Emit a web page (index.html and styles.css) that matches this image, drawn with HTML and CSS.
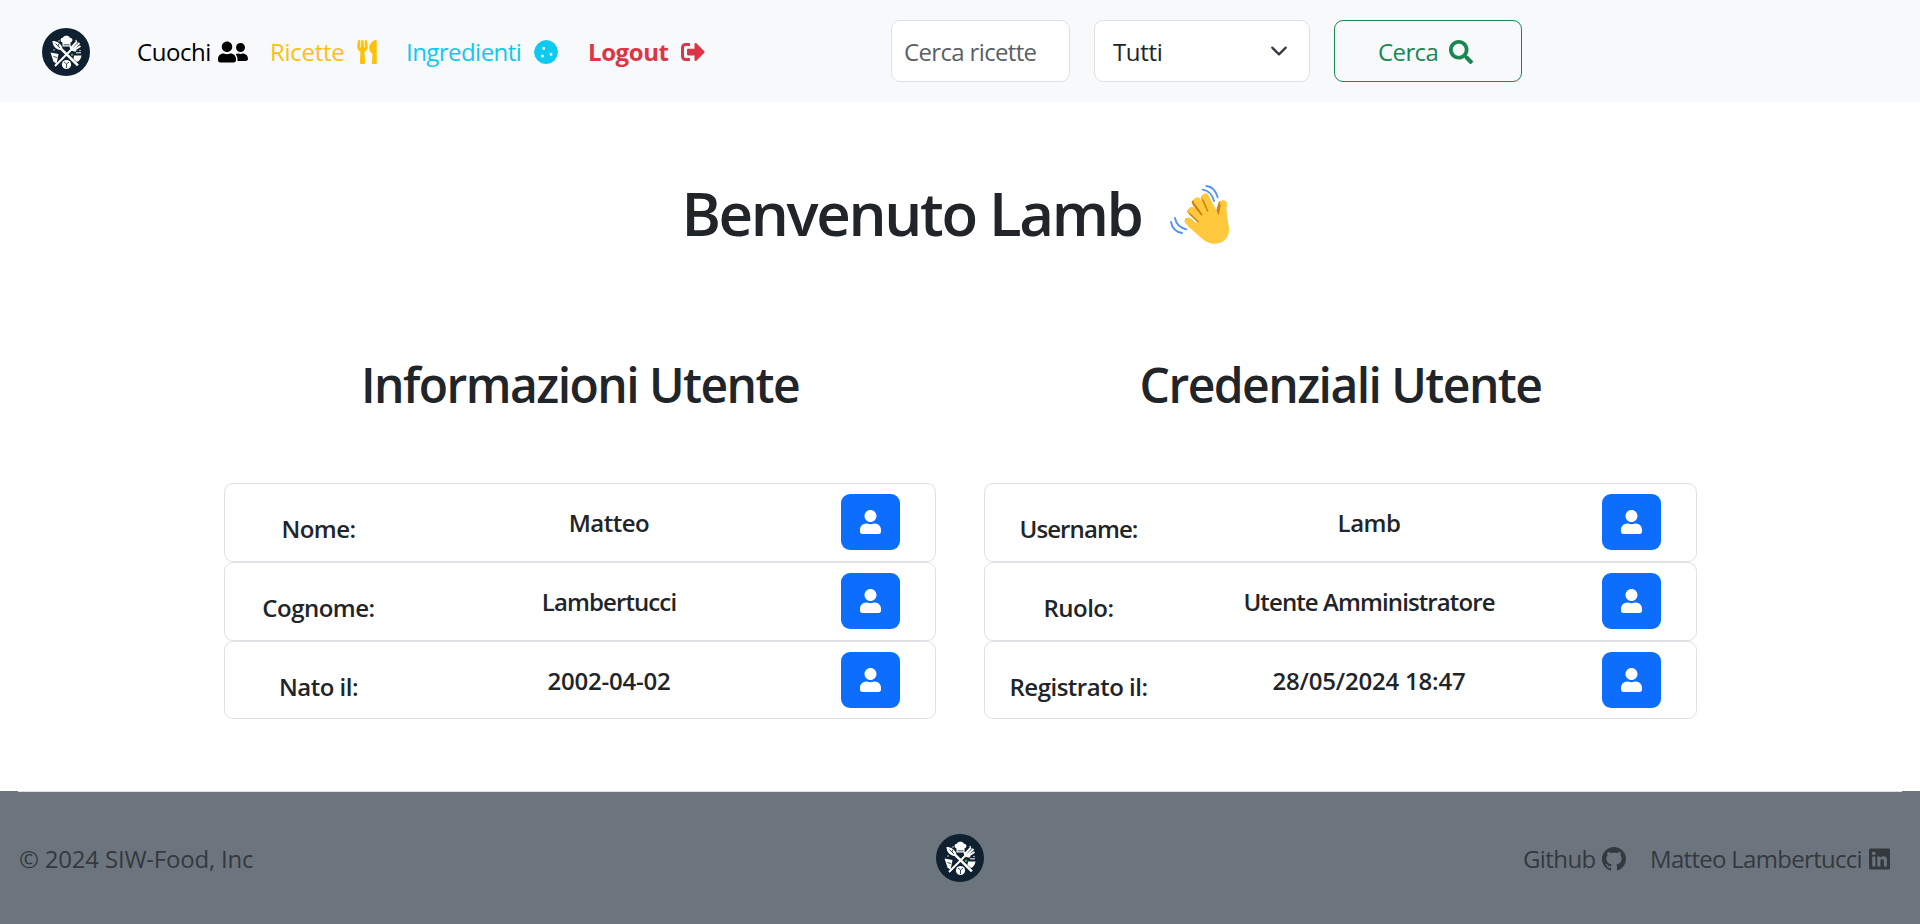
FILE: index.html
```html
<!DOCTYPE html>
<html lang="it">
<head>
<meta charset="utf-8">
<title>SIW-Food</title>
<link rel="stylesheet" href="styles.css">
</head>
<body>
<svg class="sprite" aria-hidden="true">
  <symbol id="logo" viewBox="0 0 48 48">
    <circle cx="24" cy="24" r="24" fill="#0f2131"/>
    <g fill="#fff">
      <path d="M20.500 18.500V14.400C17.800 13.800 18 9.500 21 9.800C21.800 7.200 27 7.200 27.800 9.800C31 9.500 31.300 13.800 28.500 14.400V18.500Z"/>
      <path d="M10.500 13C15 13 19.500 15.500 20.500 20.500L36.800 36.500L35 38.300L18.500 22C14 21.500 10.500 18 10.500 13Z"/>
      <path d="M8.500 24.500L16.500 26L14.500 36L11.500 33.500Z"/>
      <path d="M32 27.500H39.500C39 30.500 37.500 33 35 34L31.500 31Z"/>
      <circle cx="24.500" cy="36.500" r="4.600"/>
      <circle cx="12" cy="22" r=".7"/><circle cx="17" cy="13" r=".7"/><circle cx="34" cy="12.500" r=".7"/><circle cx="38" cy="22.500" r=".7"/>
    </g>
    <path d="M13 38L31 20M29 20L35 13.500M31 21L37.500 15M31.500 22.500L38.500 18" fill="none" stroke="#fff" stroke-width="1.900"/>
    <path d="M28.500 18C28.500 23 33 23 34 22" fill="none" stroke="#fff" stroke-width="1.800"/>
    <path d="M13.500 15.500L18 20M17 15.500L16 18M21.500 16.800H27.500M11.500 28.500L15 29.500M22 34L24.500 36L27 34M24.500 36V40" stroke="#0f2131" stroke-width=".8" fill="none"/>
    <circle cx="30" cy="26.800" r="1.200" fill="#43b02a"/>
    <path d="M34 24.800H39" stroke="#fff" stroke-width="1"/>
  </symbol>
  <symbol id="user" viewBox="0 0 448 512"><path d="M224 256c70.700 0 128-57.300 128-128S294.700 0 224 0 96 57.300 96 128s57.300 128 128 128zm89.600 32h-16.700c-22.200 10.200-46.900 16-72.900 16s-50.600-5.800-72.900-16h-16.700C60.200 288 0 348.200 0 422.400V464c0 26.500 21.500 48 48 48h352c26.500 0 48-21.500 48-48v-41.600c0-74.200-60.200-134.400-134.400-134.400z"/></symbol>
</svg>

<header class="navbar">
  <svg class="logo"><use href="#logo"/></svg>
  <nav class="links">
    <a class="link link-cooks"><span>Cuochi</span>
      <svg width="30" height="24" viewBox="0 0 640 512"><path d="M192 256c61.900 0 112-50.100 112-112S253.900 32 192 32 80 82.100 80 144s50.100 112 112 112zm76.800 32h-8.300c-20.800 10-43.900 16-68.500 16s-47.600-6-68.500-16h-8.300C51.600 288 0 339.600 0 403.200V432c0 26.500 21.500 48 48 48h288c26.500 0 48-21.500 48-48v-28.800c0-63.600-51.600-115.200-115.200-115.200zM480 256c53 0 96-43 96-96s-43-96-96-96-96 43-96 96 43 96 96 96zm48 32h-3.800c-13.900 4.800-28.600 8-44.200 8s-30.300-3.200-44.200-8H432c-20.400 0-39.200 5.900-55.700 15.400 24.400 26.300 39.700 61.200 39.700 99.800v38.400c0 2.200-.5 4.300-.6 6.400H592c26.500 0 48-21.500 48-48 0-61.900-50.100-112-112-112z"/></svg></a>
    <a class="link link-recipes"><span>Ricette</span>
      <svg width="20" height="24" viewBox="0 0 416 512"><path d="M207.900 15.200c.8 4.700 16.100 94.500 16.100 128.800 0 52.300-27.800 89.600-68.900 104.600L168 486.700c.7 13.700-10.200 25.300-24 25.300H80c-13.700 0-24.700-11.500-24-25.300l12.900-238.100C27.700 233.600 0 196.200 0 144 0 109.600 15.300 19.900 16.100 15.200 19.300-5.100 61.400-5.400 64 16.300v141.200c1.300 3.400 15.100 3.200 16 0 1.400-25.300 7.900-139.200 8-141.800 3.300-20.800 44.700-20.800 47.900 0 .2 2.700 6.600 116.500 8 141.800.9 3.200 14.800 3.400 16 0V16.300c2.600-21.600 44.800-21.400 48-1.100zm119.200 285.700l-15 185.100c-1.200 14 9.900 26 23.900 26h56c13.300 0 24-10.700 24-24V24c0-13.200-10.700-24-24-24-82.500 0-221.400 178.500-64.900 300.900z"/></svg></a>
    <a class="link link-ingredients"><span>Ingredienti</span>
      <svg width="24" height="24" viewBox="0 0 24 24"><path fill-rule="evenodd" d="M8 .9L12 0L16 .8L20 3L22.800 7L24 12L23.100 16.300L20.500 20.500L16.500 23.200L12 24L7.500 23.200L3.400 20.300L.9 16.500L0 12L1.200 7.500L4 3.400ZM9.700 6.800a1.500 1.500 0 1 0 0 3a1.500 1.500 0 1 0 0-3M8.500 14.500a1.500 1.500 0 1 0 0 3a1.500 1.500 0 1 0 0-3M17 12.800a1.500 1.500 0 1 0 0 3a1.500 1.500 0 1 0 0-3"/></svg></a>
    <a class="link link-logout"><span>Logout</span>
      <svg width="24" height="24" viewBox="0 0 512 512"><path d="M497 273L329 441c-15 15-41 4.500-41-17v-96H152c-13.300 0-24-10.700-24-24v-96c0-13.300 10.700-24 24-24h136V88c0-21.400 25.900-32 41-17l168 168c9.300 9.400 9.300 24.600 0 34zM192 436v-40c0-6.600-5.400-12-12-12H96c-17.700 0-32-14.300-32-32V160c0-17.700 14.300-32 32-32h84c6.600 0 12-5.400 12-12V76c0-6.600-5.400-12-12-12H96c-53 0-96 43-96 96v192c0 53 43 96 96 96h84c6.600 0 12-5.400 12-12z"/></svg></a>
  </nav>
  <form class="search">
    <input class="search-input" type="text" placeholder="Cerca ricette">
    <div class="select"><span>Tutti</span>
      <svg width="18" height="18" viewBox="0 0 16 16"><path d="m2 5 6 6 6-6" fill="none" stroke="#343a40" stroke-width="2" stroke-linecap="round" stroke-linejoin="round"/></svg></div>
    <button class="search-btn" type="button"><span>Cerca</span>
      <svg width="24" height="24" viewBox="0 0 512 512"><path d="M505 442.700L405.300 343c-4.500-4.500-10.600-7-17-7H372c27.600-35.300 44-79.700 44-128C416 93.100 322.900 0 208 0S0 93.100 0 208s93.100 208 208 208c48.300 0 92.700-16.400 128-44v16.300c0 6.400 2.500 12.500 7 17l99.700 99.700c9.400 9.400 24.600 9.400 33.900 0l28.300-28.300c9.400-9.400 9.400-24.600.1-34zM208 336c-70.700 0-128-57.200-128-128 0-70.700 57.200-128 128-128 70.700 0 128 57.200 128 128 0 70.700-57.200 128-128 128z"/></svg></button>
  </form>
</header>

<main>
  <h1 class="welcome"><span>Benvenuto Lamb</span>
    <svg class="wave" viewBox="24 18 180 180">
      <g fill="none" stroke-linecap="round">
        <path d="M133 21Q158 23 167 55M122 32Q147 35 156 66M39 117Q44 144 73 151M27 129Q32 157 60 162" stroke="#5491f5" stroke-width="5.500"/>
        <path d="M98 71L130 116M85 97L118 128M77 126L108 148M126 58L147 100M177 75L168 108" stroke="#d07f10" stroke-width="17"/>
        <path d="M106 66L148 124M130 54L162 115M90 95L135 140M80 127L128 170" stroke="#ffc83d" stroke-width="22"/>
        <path d="M184 75L179 125" stroke="#ffc83d" stroke-width="22"/>
      </g>
      <path d="M124 104L160 95Q164 110 169 102L194 94Q195 120 201 146C204 178 180 196 153 194C133 193 118 178 106 166L76 140L106 130Z" fill="#ffc83d"/>
      <path d="M98 78L118 107M84 105L108 128M123 64L137 96M174 78L169 104" fill="none" stroke="#d07f10" stroke-width="4.500" stroke-linecap="round"/>
    </svg>
  </h1>
  <div class="columns">
    <section class="panel">
      <h2 class="panel-title">Informazioni Utente</h2>
      <div class="row"><span class="label">Nome:</span><span class="value">Matteo</span><button class="btn"><svg width="21" height="24"><use href="#user"/></svg></button></div>
      <div class="row"><span class="label">Cognome:</span><span class="value snug">Lambertucci</span><button class="btn"><svg width="21" height="24"><use href="#user"/></svg></button></div>
      <div class="row"><span class="label">Nato il:</span><span class="value digits">2002-04-02</span><button class="btn"><svg width="21" height="24"><use href="#user"/></svg></button></div>
    </section>
    <section class="panel">
      <h2 class="panel-title">Credenziali Utente</h2>
      <div class="row"><span class="label snug">Username:</span><span class="value">Lamb</span><button class="btn"><svg width="21" height="24"><use href="#user"/></svg></button></div>
      <div class="row"><span class="label">Ruolo:</span><span class="value snug">Utente Amministratore</span><button class="btn"><svg width="21" height="24"><use href="#user"/></svg></button></div>
      <div class="row"><span class="label">Registrato il:</span><span class="value digits">28/05/2024 18:47</span><button class="btn"><svg width="21" height="24"><use href="#user"/></svg></button></div>
    </section>
  </div>
</main>

<footer class="footer">
  <div class="footer-inner">
    <span class="copyright">© 2024 SIW-Food, Inc</span>
    <svg class="logo"><use href="#logo"/></svg>
    <div class="social">
      <a class="social-link github"><span>Github</span>
        <svg width="24" height="24" viewBox="0 0 16 16"><path d="M8 0C3.580 0 0 3.580 0 8c0 3.540 2.290 6.530 5.470 7.590.4.070.55-.17.55-.38 0-.19-.01-.82-.01-1.490-2.010.37-2.530-.49-2.690-.94-.09-.23-.48-.94-.82-1.130-.28-.15-.68-.52-.01-.53.63-.01 1.080.58 1.230.82.72 1.210 1.870.87 2.330.66.070-.52.28-.87.51-1.070-1.780-.2-3.640-.89-3.640-3.950 0-.87.31-1.590.82-2.150-.08-.2-.36-1.020.08-2.120 0 0 .67-.21 2.200.82.64-.18 1.320-.27 2-.27s1.360.09 2 .27c1.530-1.040 2.200-.82 2.200-.82.44 1.100.16 1.920.08 2.120.51.56.82 1.270.82 2.150 0 3.070-1.870 3.750-3.650 3.950.29.25.54.73.54 1.480 0 1.070-.01 1.930-.01 2.200 0 .21.15.46.55.38A8.010 8.010 0 0 0 16 8c0-4.420-3.580-8-8-8"/></svg></a>
      <a class="social-link linkedin"><span>Matteo Lambertucci</span>
        <svg width="21" height="24" viewBox="0 0 448 512"><path d="M416 32H31.900C14.300 32 0 46.500 0 64.300v383.400C0 465.500 14.300 480 31.900 480H416c17.600 0 32-14.500 32-32.300V64.300c0-17.800-14.400-32.300-32-32.300zM135.400 416H69V202.200h66.500V416zm-33.200-243c-21.300 0-38.500-17.300-38.500-38.500S80.900 96 102.200 96c21.200 0 38.500 17.300 38.500 38.500 0 21.300-17.200 38.500-38.500 38.500zm282.100 243h-66.400V312c0-24.800-.5-56.700-34.500-56.700-34.600 0-39.900 27-39.900 54.900V416h-66.400V202.200h63.700v29.200h.9c8.900-16.800 30.600-34.500 62.200-34.500 66.500 0 78.900 43.800 78.900 100.900V416z"/></svg></a>
    </div>
  </div>
</footer>
</body>
</html>
```
FILE: styles.css
```css
* { box-sizing: border-box; }
body {
  margin: 0;
  height: 924px;
  display: flex;
  flex-direction: column;
  font: 400 24px/36px "Open Sans", "Noto Sans", sans-serif;
  color: #212529;
  background: #fff;
}
svg { fill: currentColor; flex: none; display: block; }
.sprite { position: absolute; width: 0; height: 0; }
.logo { width: 48px; height: 48px; }

.navbar {
  height: 102px;
  padding: 1px 0 0 42px;
  display: flex;
  align-items: center;
  background: #f8f9fb;
}
.links { display: flex; margin-left: 47px; }
.link { display: flex; align-items: center; justify-content: space-between; white-space: nowrap; }
.link-cooks { width: 111px; color: #000; letter-spacing: -.45px; }
.link-recipes { width: 107px; margin-left: 22px; color: #ffc107; letter-spacing: -.3px; }
.link-ingredients { width: 152px; margin-left: 29px; color: #0dcaf0; letter-spacing: -.55px; }
.link-logout { width: 117px; margin-left: 30px; color: #dc3545; font-weight: 700; letter-spacing: -.4px; }

.search { display: flex; gap: 24px; margin-left: 186px; padding-bottom: 1px; }
.search-input, .select, .search-btn {
  height: 62px;
  border: 1px solid #dee2e6;
  border-radius: 9px;
  background: #fff;
  font: inherit;
}
.search-input { width: 179px; padding: 1px 0 0 12px; letter-spacing: -.65px; outline: 0; }
.search-input::placeholder { color: #595f64; opacity: 1; }
.select { width: 216px; padding: 1px 21px 0 18px; display: flex; align-items: center; justify-content: space-between; letter-spacing: -.35px; }
.select svg { margin-top: -2px; }
.search-btn {
  width: 188px;
  padding: 1px 48px 0 43px;
  display: flex;
  align-items: center;
  justify-content: space-between;
  color: #198754;
  border-color: #198754;
  background: transparent;
  letter-spacing: -.6px;
}

main { height: 689px; }
.welcome {
  margin: 75px 0 0;
  padding-right: 9px;
  height: 72px;
  display: flex;
  justify-content: center;
  gap: 28px;
  font-size: 60px;
  line-height: 72px;
  font-weight: 550;
  letter-spacing: -2.35px;
}
.wave { width: 60px; height: 60px; margin-top: 8px; }
.columns { display: grid; grid-template-columns: 712px 713px; gap: 48px; margin: 107px 223px 0 224px; }
.panel-title {
  margin: 0 0 70px;
  height: 57px;
  font-size: 48px;
  line-height: 57px;
  font-weight: 550;
  letter-spacing: -1.55px;
  text-align: center;
}
.row {
  height: 79px;
  display: grid;
  grid-template-columns: 187px 394px 1fr;
  grid-template-rows: 77px;
  align-items: center;
  justify-items: center;
  border: 1px solid #dee2e6;
  border-radius: 9px;
  font-weight: 540;
  letter-spacing: -.5px;
}
.row:last-child { height: 78px; }
.label { padding-top: 12px; }
.snug { letter-spacing: -.9px; }
.digits { letter-spacing: -.2px; }
.btn {
  width: 59px;
  height: 56px;
  padding: 0;
  margin-top: 10px;
  align-self: start;
  display: flex;
  align-items: center;
  justify-content: center;
  border: 0;
  border-radius: 9px;
  color: #fff;
  background: #0d6efd;
}

.footer { height: 133px; padding: 0 18px; background: #6c757d; color: #34393e; }
.footer-inner {
  height: 133px;
  padding-top: 2px;
  display: grid;
  grid-template-columns: 1fr 48px 1fr;
  align-items: center;
  border-top: 1px solid #dee2e6;
}
.footer-inner .logo { margin-bottom: 2px; }
.copyright { padding-left: 1px; letter-spacing: -.2px; }
.social { display: flex; justify-content: flex-end; gap: 24px; padding-right: 12px; }
.social-link { display: flex; align-items: center; justify-content: space-between; white-space: nowrap; }
.github { width: 103px; letter-spacing: -.6px; }
.linkedin { width: 240px; letter-spacing: -.7px; }
```
